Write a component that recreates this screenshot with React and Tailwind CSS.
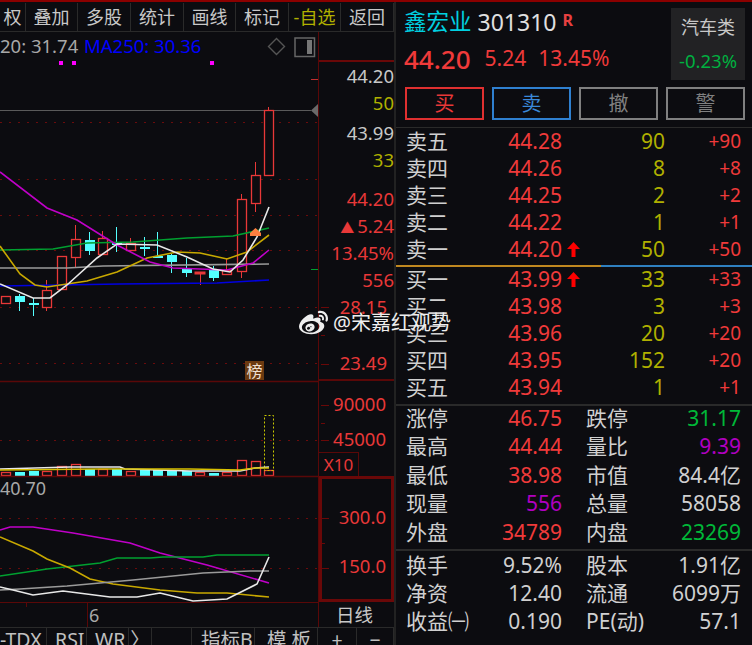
import { FaWeibo } from 'react-icons/fa';

const FONT = '[font-family:"Noto_Sans","Noto_Sans_CJK_SC",sans-serif]';

const toolbar = [
  ['权', 'w-[26px]', 'text-[#c8c8c8]'],
  ['叠加', 'w-[52px]', 'text-[#c8c8c8]'],
  ['多股', 'w-[53px]', 'text-[#c8c8c8]'],
  ['统计', 'w-[53px]', 'text-[#c8c8c8]'],
  ['画线', 'w-[52px]', 'text-[#c8c8c8]'],
  ['标记', 'w-[53px]', 'text-[#c8c8c8]'],
  ['-自选', 'w-[52px]', 'text-[#b0b000]'],
  ['返回', 'w-[53px]', 'text-[#c8c8c8]'],
];

// x, body top, body bottom, wick top, wick bottom
const redCandles = [
  [1, 296, 303, 296, 303],
  [42, 290, 307, 280, 311],
  [57, 256, 289, 256, 289],
  [71, 239, 257, 225, 267],
  [98, 238, 254, 231, 255],
  [126, 243, 250, 238, 252],
  [222, 270, 274, 258, 274],
  [237, 199, 271, 194, 278],
  [251, 175, 203, 162, 212],
  [264, 110, 175, 107, 175],
];

const cyanCandles = [
  [15, 296, 302, 294, 311],
  [29, 303, 305, 298, 316],
  [85, 240, 251, 232, 255],
  [112, 243, 245, 227, 252],
  [140, 247, 249, 237, 256],
  [153, 256, 258, 232, 258],
  [167, 255, 262, 254, 273],
  [182, 269, 273, 258, 277],
  [209, 270, 278, 266, 281],
];

const volBars = [
  [1, 472, 'r'], [15, 472, 'c'], [29, 471, 'c'], [42, 471, 'r'], [57, 466, 'r'],
  [71, 464, 'r'], [85, 469, 'c'], [98, 469, 'r'], [112, 469, 'c'], [126, 471, 'r'],
  [140, 470, 'c'], [153, 470, 'c'], [167, 470, 'c'], [182, 471, 'c'], [195, 472, 'r'],
  [209, 473, 'c'], [222, 472, 'r'], [237, 460, 'r'], [251, 461, 'r'], [264, 470, 'r'],
];

const dotted = [122, 179, 215, 250, 307, 363, 440, 518, 568];

// axis ticks: y, length
const ticks = [
  [307, 8], [335, 4], [364, 8], [405, 8], [423, 4], [440, 8], [518, 8], [543, 4], [568, 8],
];

const lines = [
  ['#9a9a9a', '0,268 67,268 103,266 269,264'],
  ['#0000e0', '0,286 120,284 217,283 269,280'],
  ['#00a030', '0,250 53,249 87,243 133,242 187,238 233,236 269,228'],
  ['#c8a800', '0,246 20,274 35,285 47,287 87,281 117,272 147,258 177,252 200,253 227,259 247,252 269,235'],
  ['#c000c8', '0,172 47,208 77,220 117,245 150,262 173,268 227,270 253,263 269,250'],
  ['#e8e8e8', '0,284 33,298 50,298 67,285 97,258 117,244 157,245 187,257 213,269 230,272 243,260 257,237 269,207'],
  // volume averages
  ['#e8e8e8', '0,469 70,467 120,467 125,469 190,471 240,471 255,468 269,467'],
  ['#d8c000', '0,470 100,469 190,469 240,470 255,468 269,468'],
  // lower indicator
  ['#c000c8', '0,530 10,527 33,527 73,533 130,543 160,553 207,565 269,583'],
  ['#00a030', '0,576 47,569 100,563 117,558 150,558 163,557 203,557 217,555 269,555'],
  ['#c8a800', '0,537 33,551 47,559 70,568 90,579 113,584 160,590 197,593 227,593 269,597'],
  ['#9a9a9a', '0,590 20,589 67,586 133,580 203,573 250,571 269,571'],
  ['#e8e8e8', '0,587 13,590 33,595 63,591 110,597 137,597 160,593 193,601 227,599 257,584 269,557'],
];

function Plot() {
  return (
    <div className="relative w-[318px] h-[595px] shrink-0 overflow-hidden">
      <svg width="318" height="595" viewBox="0 32 318 595" className="block">
        {dotted.map(y => (
          <line key={y} x1="0" x2="318" y1={y + 0.5} y2={y + 0.5} stroke="#6a0c0c" strokeDasharray="2 7" />
        ))}
        <line x1="0" x2="311" y1="110.5" y2="110.5" stroke="#5a5a5a" />
        <polygon points="311,110.5 318,104 318,117" fill="#6a6a6a" />
        <line x1="311" x2="318" y1="79.5" y2="79.5" stroke="#c03030" />
        <line x1="311" x2="318" y1="269.5" y2="269.5" stroke="#00a030" />

        {redCandles.map(([x, t, b, wt, wb]) => (
          <g key={x} stroke="#e83838" fill="#0c0c10">
            <line x1={x + 4.5} x2={x + 4.5} y1={wt} y2={wb} />
            <rect x={x + 0.5} y={t + 0.5} width="9" height={b - t} strokeWidth="1.3" />
          </g>
        ))}
        <g stroke="#e83838" fill="#e83838">
          <line x1="200.5" x2="200.5" y1="272" y2="285" />
          <rect x="195" y="272" width="10" height="2" />
        </g>
        {cyanCandles.map(([x, t, b, wt, wb]) => (
          <g key={x} fill="#54ffff" stroke="#54ffff">
            <line x1={x + 4.5} x2={x + 4.5} y1={wt} y2={wb} />
            <rect x={x} y={t} width="10" height={b - t} stroke="none" />
          </g>
        ))}

        {volBars.map(([x, t, kind]) =>
          kind === 'c' ? (
            <rect key={x} x={x} y={t} width="10" height={476 - t} fill="#54ffff" />
          ) : (
            <rect key={x} x={x + 0.5} y={t + 0.5} width="9" height={475 - t} fill="#0c0c10" stroke="#e83838" strokeWidth="1.3" />
          )
        )}
        <rect x="264.5" y="415.5" width="9" height="55" fill="none" stroke="#c8c800" strokeDasharray="2 2" />

        {lines.map(([color, pts], i) => (
          <polyline key={i} points={pts} fill="none" stroke={color} strokeWidth="1.6" />
        ))}

        <polygon points="255.5,228 261,233 261,236 250,236 250,233" fill="#ff8040" />

        {/* pane separators */}
        <line x1="0" x2="318" y1="381.5" y2="381.5" stroke="#5a0808" strokeWidth="1.5" />
        <line x1="0" x2="318" y1="476.5" y2="476.5" stroke="#5a0808" strokeWidth="1.5" />
        <line x1="0" x2="318" y1="602.5" y2="602.5" stroke="#5a0808" />
        <line x1="26.5" x2="26.5" y1="602" y2="607" stroke="#5a0808" />
        <line x1="87.5" x2="87.5" y1="602" y2="627" stroke="#5a0808" />

        {/* magenta markers */}
        <rect x="59" y="61" width="4" height="4" fill="#ff00ff" />
        <rect x="72" y="61" width="4" height="4" fill="#ff00ff" />
        <rect x="210" y="61" width="4" height="4" fill="#ff00ff" />

        {/* legend icons */}
        <polygon points="276.5,38.5 284.5,46.5 276.5,54.5 268.5,46.5" fill="none" stroke="#555" strokeWidth="1.4" />
        <rect x="295" y="38" width="19.5" height="18.5" fill="none" stroke="#666" strokeWidth="1.5" />
        <rect x="307" y="40" width="5" height="14" fill="#777" />
      </svg>

      <div className="absolute left-0 top-0 flex h-[28px] items-center text-[18.5px] whitespace-nowrap">
        <span className="w-[84px] text-[#a8a8a8]">20: 31.74</span>
        <span className="text-[#0000ff]">MA250: 30.36</span>
      </div>
      <div className="absolute left-0 top-[444px] text-[18px] leading-[24px] text-[#a8a8a8]">40.70</div>
      <div className="absolute left-[89px] top-[571px] text-[18px] leading-[24px] text-[#a8a8a8]">6</div>
      <div className="absolute left-[245px] top-[329px] flex h-[19px] w-[19px] items-center justify-center bg-[#6b3a10] text-[16px] text-[#f0e0d0]">榜</div>
    </div>
  );
}

const upperAxis = [
  ['44.20', 'text-[#c8c8c8] mt-0'],
  ['50', 'text-[#b0b000] mt-0'],
  ['43.99', 'text-[#c8c8c8] mt-[3px]'],
  ['33', 'text-[#b0b000] mt-0'],
  ['44.20', 'text-[#e83838] mt-[12px]'],
  ['5.24', 'text-[#e83838] mt-0', true],
  ['13.45%', 'text-[#e83838] mt-0'],
  ['556', 'text-[#e83838] mt-0'],
  ['28.15', 'text-[#e83838] mt-0 pr-[7px]'],
  ['23.49', 'text-[#e83838] mt-[29px] pr-[7px]'],
];

function Axis() {
  return (
    <div className="relative flex w-[76px] shrink-0 flex-col border-l border-[#5a0808] text-[18.5px]">
      <svg width="76" height="595" viewBox="318 32 76 595" className="absolute left-0 top-0">
        {ticks.map(([y, len]) => (
          <line key={y} x1="320" x2={320 + len} y1={y + 0.5} y2={y + 0.5} stroke="#6a0808" />
        ))}
      </svg>
      <div className="h-[30px] border-b-2 border-[#6a0808]" />
      <div className="h-[319px] border-b-2 border-[#5a0808] text-right">
        {upperAxis.map(([text, cls, up], i) => (
          <div key={i} className={`h-[27px] leading-[27px] ${cls}`}>
            {up && <span className="mr-[3px] text-[14px]">▲</span>}
            {text}
          </div>
        ))}
      </div>
      <div className="flex h-[95px] flex-col text-right text-[#e83838]">
        <div className="mt-[9px] h-[27px] pr-[8px] leading-[27px]">90000</div>
        <div className="mt-[8px] h-[27px] pr-[8px] leading-[27px]">45000</div>
        <div className="mt-auto flex h-[25px] w-[40px] items-center justify-center border-t border-r border-[#5a0808] text-[17px]">X10</div>
      </div>
      <div className="relative h-[126px] border-[3px] border-[#6a0808] text-right text-[#e83838]">
        <div className="mt-[24px] h-[27px] pr-[5px] leading-[27px]">300.0</div>
        <div className="mt-[22px] h-[27px] pr-[5px] leading-[27px]">150.0</div>
      </div>
      <div className="flex h-[25px] items-center justify-center pr-[4px] text-[#c8c8c8]">日线</div>
    </div>
  );
}

const tabs = [
  ['-TDX', 'w-[47px] justify-start'],
  ['RSI', 'w-[40px] justify-start pl-[8px]'],
  ['WR', 'w-[42px] justify-start pl-[8px]'],
  ['〉', 'w-[23px] justify-center'],
  ['', 'w-[40px] justify-center'],
  ['指标B', 'w-[63px] justify-start pl-[9px]'],
  ['模 板', 'w-[63px] justify-start pl-[12px]'],
  ['+', 'w-[39px] justify-center'],
  ['−', 'w-[37px] justify-center'],
];

const sells = [
  ['卖五', '44.28', '90', '+90'],
  ['卖四', '44.26', '8', '+8'],
  ['卖三', '44.25', '2', '+2'],
  ['卖二', '44.22', '1', '+1'],
  ['卖一', '44.20', '50', '+50', true],
];

const buys = [
  ['买一', '43.99', '33', '+33', true],
  ['买二', '43.98', '3', '+3'],
  ['买三', '43.96', '20', '+20'],
  ['买四', '43.95', '152', '+20'],
  ['买五', '43.94', '1', '+1'],
];

const R = 'text-[#f03a3a]';
const W = 'text-[#d0d0d0]';
const G = 'text-[#00b838]';
const P = 'text-[#b000c0]';

const stats = [
  ['涨停', '46.75', R, '跌停', '31.17', G],
  ['最高', '44.44', R, '量比', '9.39', P],
  ['最低', '38.98', R, '市值', '84.4亿', W],
  ['现量', '556', P, '总量', '58058', W],
  ['外盘', '34789', R, '内盘', '23269', G],
];

const finance = [
  ['换手', '9.52%', W, '股本', '1.91亿', W],
  ['净资', '12.40', W, '流通', '6099万', W],
  ['收益㈠', '0.190', W, 'PE(动)', '57.1', W],
];

function UpArrow() {
  return (
    <svg width="13" height="15" viewBox="0 0 13 15" className="ml-[5px]">
      <path d="M6.5 0 L13 7 H8.5 V15 H4.5 V7 H0 Z" fill="#ff0000" />
    </svg>
  );
}

function QuoteRow({ row, shift }) {
  const [label, price, qty, delta, arrow] = row;
  return (
    <div className={`flex h-[27px] items-center leading-[27px] ${shift}`}>
      <span className="w-[102px] pl-[10px] text-[#d0d0d0]">{label}</span>
      <span className="w-[64px] text-right text-[#f03a3a]">{price}</span>
      <span className="flex w-[18px] items-center">{arrow && <UpArrow />}</span>
      <span className="w-[85px] text-right text-[#b0b000]">{qty}</span>
      <span className="w-[76px] text-right text-[19px] text-[#f03a3a]">{delta}</span>
    </div>
  );
}

function StatRow({ row, height }) {
  const [l1, v1, c1, l2, v2, c2] = row;
  return (
    <div className={`flex items-center ${height}`}>
      <span className="w-[80px] pl-[10px] whitespace-nowrap text-[#d0d0d0]">{l1}</span>
      <span className={`w-[86px] text-right ${c1}`}>{v1}</span>
      <span className="w-[95px] pl-[24px] whitespace-nowrap text-[#d0d0d0]">{l2}</span>
      <span className={`w-[84px] text-right whitespace-nowrap ${c2}`}>{v2}</span>
    </div>
  );
}

function TradeBtn({ label, cls }) {
  return (
    <div className={`flex h-[33px] w-[79px] items-center justify-center border-2 text-[20px] ${cls}`}>{label}</div>
  );
}

function QuotePanel() {
  return (
    <div className="flex h-[643px] w-[356px] shrink-0 flex-col text-[21px]">
      <div className="flex h-[80px] pl-[8px]">
        <div className="w-[267px]">
          <div className="flex h-[40px] items-center text-[23px]">
            <span className="text-[22.5px] text-[#00d0e0]">鑫宏业</span>
            <span className="ml-[6px] text-[#e0e0e0]">301310</span>
            <span className="mb-[4px] ml-[6px] text-[16px] font-bold text-[#e84040]">R</span>
          </div>
          <div className="flex h-[34px] items-center text-[#f03a3a]">
            <span className="text-[26px] font-medium">44.20</span>
            <span className="ml-[14px]">5.24</span>
            <span className="ml-[12px]">13.45%</span>
          </div>
        </div>
        <div className="mt-[6px] flex h-[72px] w-[74px] flex-col items-center bg-[#222224]">
          <span className="mt-[6px] text-[18px] text-[#c8c8c8]">汽车类</span>
          <span className="mt-[6px] text-[18.5px] text-[#00b040]">-0.23%</span>
        </div>
      </div>
      <div className="mt-[5px] flex gap-[8px] pl-[9px]">
        <TradeBtn label="买" cls="border-[#e03030] text-[#e83838]" />
        <TradeBtn label="卖" cls="border-[#2f80d0] text-[#3a88d8]" />
        <TradeBtn label="撤" cls="border-[#808080] text-[#808080]" />
        <TradeBtn label="警" cls="border-[#808080] text-[#808080]" />
      </div>
      <div className="mt-[7px] h-[134px] border-t border-[#2a2a2a] pt-[1px]">
        {sells.map(r => <QuoteRow key={r[0]} row={r} shift="pb-[3px]" />)}
      </div>
      <div className="flex h-[6px] pt-[4px]">
        <div className="h-[2px] w-[205px] bg-[#c08820]" />
        <div className="h-[2px] w-[151px] bg-[#2f80c0]" />
      </div>
      <div className="h-[137px] pt-[1px]">
        {buys.map(r => <QuoteRow key={r[0]} row={r} shift="pb-[5px]" />)}
      </div>
      <div className="h-[145px] border-t-2 border-[#2a2a2a] pt-[1px]">
        {stats.map(r => <StatRow key={r[0]} row={r} height="h-[28.5px] pb-[6px]" />)}
      </div>
      <div className="flex-1 border-t-2 border-[#2a2a2a] pt-[1px]">
        {finance.map(r => <StatRow key={r[0]} row={r} height="h-[28px]" />)}
      </div>
    </div>
  );
}

export default function App() {
  return (
    <div className={`relative flex h-[645px] w-[752px] overflow-hidden border-t-2 border-[#8b0000] bg-[#0c0c10] ${FONT}`}>
      <div className="flex h-[643px] w-[396px] shrink-0 flex-col border-r-2 border-[#222]">
        <div className="flex h-[30px] shrink-0 border-b border-[#2a2a2a] pt-[1px] text-[18px]">
          {toolbar.map(([label, w, color]) => (
            <div key={label} className={`flex items-center justify-center border-r border-[#2a2a2a] whitespace-nowrap ${w} ${color}`}>{label}</div>
          ))}
        </div>
        <div className="flex h-[595px] shrink-0">
          <Plot />
          <Axis />
        </div>
        <div className="flex h-[18px] shrink-0 overflow-hidden border-t border-[#2a2a2a] text-[19.5px] text-[#c0c0c0]">
          {tabs.map(([label, cls], i) => (
            <div key={i} className={`flex h-[24px] items-center border-r border-[#2a2a2a] whitespace-nowrap ${cls}`}>{label}</div>
          ))}
        </div>
      </div>
      <QuotePanel />
      <div className="absolute left-[299px] top-[306px] flex items-center text-[20px] text-[#eeeeee]">
        <FaWeibo size={29} />
        <span className="ml-[5px] whitespace-nowrap">@宋嘉红观势</span>
      </div>
    </div>
  );
}
